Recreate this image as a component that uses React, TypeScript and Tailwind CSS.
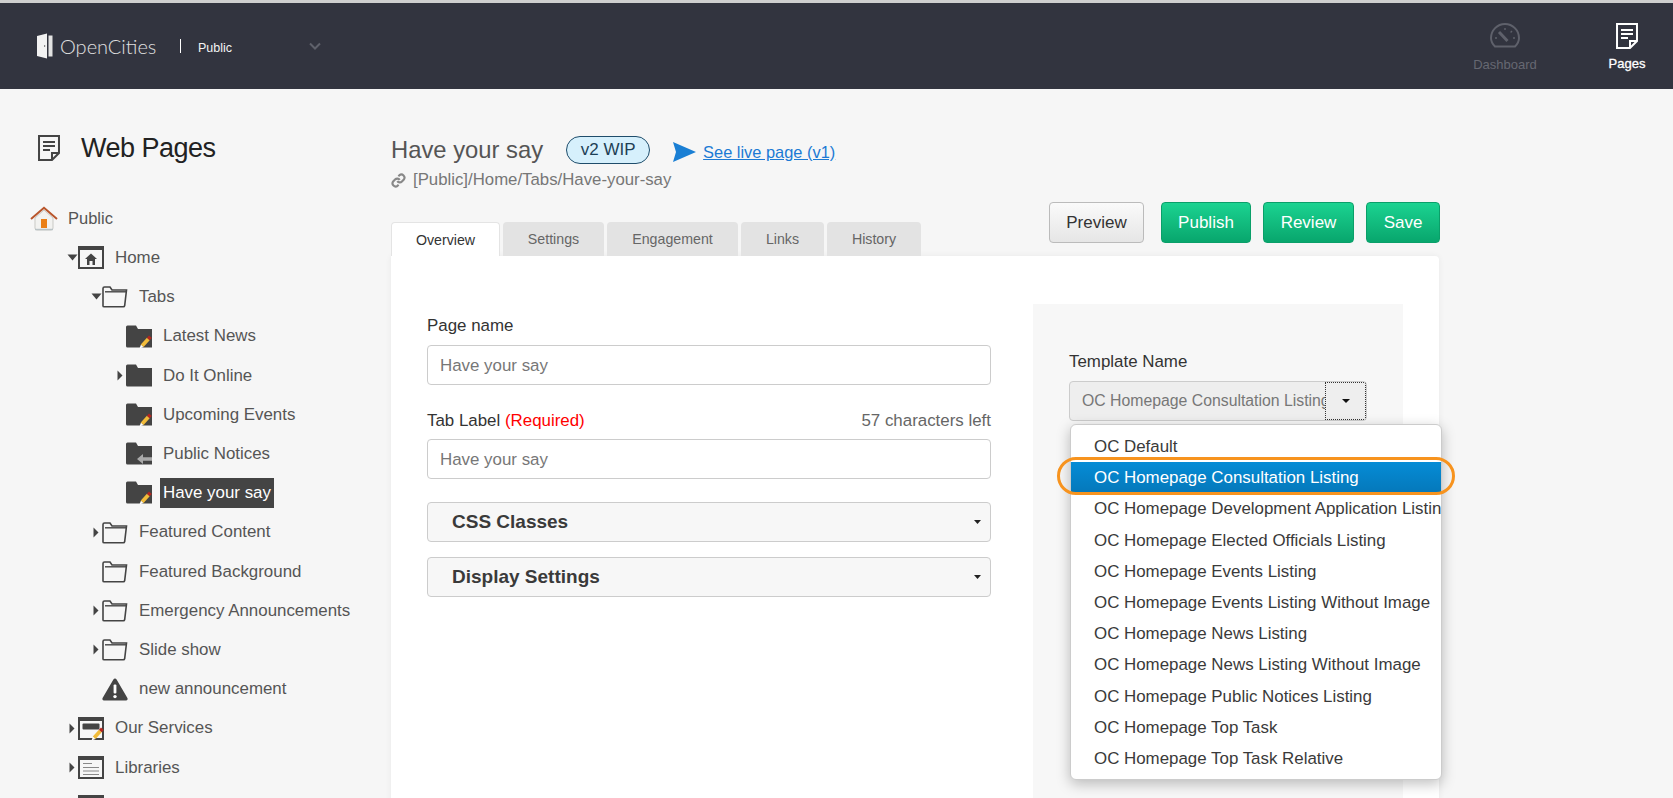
import React from "react";

const font = "font-['Liberation_Sans',Arial,sans-serif]";

const Caret = ({ dir }: { dir: "down" | "right" }) =>
  dir === "down" ? (
    <svg width="11" height="7" viewBox="0 0 11 7" className="shrink-0">
      <path d="M0.5 0.5h10L5.5 6.5z" fill="#444" />
    </svg>
  ) : (
    <svg width="6" height="11" viewBox="0 0 6 11" className="shrink-0">
      <path d="M0.5 0.5L5.5 5.5L0.5 10.5z" fill="#444" />
    </svg>
  );

const Pencil = () => (
  <g>
    <path d="M13.5 23.5L15 19.5L17.5 22z" fill="#fff" />
    <path d="M16.2 20.7L22.3 14" stroke="#f2bc3a" strokeWidth="3.8" />
    <path d="M22.3 14L24.4 11.8" stroke="#b5261e" strokeWidth="3.8" />
  </g>
);

const FolderOutline = () => (
  <svg width="26" height="23" viewBox="0 0 26 23" className="shrink-0">
    <path
      d="M1 21V3.5Q1 2 2.5 2H8l2 3h14.5l-1.8 15.5q-.2 1.2-1.4 1.2H2.2Q1 21.7 1 21z"
      fill="none"
      stroke="#444"
      strokeWidth="1.6"
    />
    <path d="M3 6.8H24" stroke="#444" strokeWidth="1.4" />
  </svg>
);

const FolderSolid = ({ mark }: { mark?: "pencil" | "arrow" }) => (
  <svg width="26" height="23" viewBox="0 0 26 23" className="shrink-0">
    <path d="M0 2Q0 0.5 1.5 0.5H10L12 4H26V22.5H1.5Q0 22.5 0 21z" fill="#444" />
    {mark === "pencil" && <Pencil />}
    {mark === "arrow" && <path d="M11 17L17 12V15.2H26V18.8H17V22z" fill="#a9a9a9" />}
  </svg>
);

const BoxIcon = ({ children }: { children?: React.ReactNode }) => (
  <svg width="26" height="23" viewBox="0 0 26 23" className="shrink-0">
    <rect x="1" y="1" width="24" height="21" fill="none" stroke="#444" strokeWidth="2" />
    <rect x="1" y="1" width="24" height="3" fill="#444" />
    {children}
  </svg>
);

const WarnIcon = () => (
  <svg width="26" height="24" viewBox="0 0 26 24" className="shrink-0">
    <path d="M13 1.5Q14 1.5 14.6 2.6L25.4 21q.8 2-1.2 2.4H1.8Q-.2 23 .6 21L11.4 2.6Q12 1.5 13 1.5z" fill="#444" />
    <rect x="11.6" y="7.5" width="2.8" height="9" rx="1" fill="#fff" />
    <circle cx="13" cy="19.6" r="1.7" fill="#fff" />
  </svg>
);

const HouseIcon = () => (
  <svg width="28" height="25" viewBox="0 0 28 25" className="shrink-0">
    <path d="M5 12V22Q5 24 7 24H21Q23 24 23 22V12L14 4z" fill="#f2f2f0" stroke="#c9c9c5" strokeWidth="1" />
    <path d="M1 13L14 1.8L27 13" fill="none" stroke="#b8552b" strokeWidth="2" />
    <rect x="11" y="13" width="6" height="9" fill="#ea7f16" />
    <path d="M5 23.5H23" stroke="#b9c3c6" strokeWidth="1.4" />
  </svg>
);

const PageIcon = ({ color, size }: { color: string; size: number }) => (
  <svg width={size} height={size * 1.18} viewBox="0 0 22 26" className="shrink-0">
    <path d="M1 1H21V18L14 25H1z" fill="none" stroke={color} strokeWidth="2" />
    <path d="M14 25V18H21" fill="none" stroke={color} strokeWidth="2" />
    <path d="M5 7H17M5 11H17M5 15H12" stroke={color} strokeWidth="2" />
  </svg>
);

const GaugeIcon = () => (
  <svg width="30" height="25" viewBox="0 0 30 25">
    <path
      d="M5 23.5Q1 19.5 1 15A14 14 0 0 1 29 15Q29 19.5 25 23.5z"
      fill="none"
      stroke="#5f616b"
      strokeWidth="2"
    />
    <path d="M9 9L17.5 18" stroke="#5f616b" strokeWidth="3" />
    <path d="M15 5v2M22 8l-1.4 1.4M25 15h-2M5 15h2" stroke="#5f616b" strokeWidth="1.4" />
  </svg>
);

const LinkIcon = () => (
  <svg width="15" height="15" viewBox="0 0 24 24" fill="none" stroke="#888" strokeWidth="3.4" className="shrink-0">
    <path d="M10 13a5 5 0 0 0 7.5.5l3-3a5 5 0 0 0-7-7l-1.7 1.7" />
    <path d="M14 11a5 5 0 0 0-7.5-.5l-3 3a5 5 0 0 0 7 7l1.7-1.7" />
  </svg>
);

type Row = {
  label: string;
  pl: number;
  caret?: "down" | "right";
  icon: React.ReactNode;
  selected?: boolean;
};

const rows: Row[] = [
  { label: "Home", pl: 66, caret: "down", icon: <BoxIcon><path d="M7 13L13 7.5L19 13H17V19H14.5V15H11.5V19H9V13z" fill="#444" /></BoxIcon> },
  { label: "Tabs", pl: 90, caret: "down", icon: <FolderOutline /> },
  { label: "Latest News", pl: 114, icon: <FolderSolid mark="pencil" /> },
  { label: "Do It Online", pl: 114, caret: "right", icon: <FolderSolid /> },
  { label: "Upcoming Events", pl: 114, icon: <FolderSolid mark="pencil" /> },
  { label: "Public Notices", pl: 114, icon: <FolderSolid mark="arrow" /> },
  { label: "Have your say", pl: 114, icon: <FolderSolid mark="pencil" />, selected: true },
  { label: "Featured Content", pl: 90, caret: "right", icon: <FolderOutline /> },
  { label: "Featured Background", pl: 90, icon: <FolderOutline /> },
  { label: "Emergency Announcements", pl: 90, caret: "right", icon: <FolderOutline /> },
  { label: "Slide show", pl: 90, caret: "right", icon: <FolderOutline /> },
  { label: "new announcement", pl: 90, icon: <WarnIcon /> },
  { label: "Our Services", pl: 66, caret: "right", icon: <BoxIcon><rect x="4.5" y="6.5" width="17" height="6" rx="1" fill="#444" /><Pencil /></BoxIcon> },
  { label: "Libraries", pl: 66, caret: "right", icon: <BoxIcon><path d="M5 7.5H14M5 11.5H21M5 15H21M5 18.5H21" stroke="#888" strokeWidth="1.1" /></BoxIcon> },
  { label: "", pl: 66, icon: <BoxIcon /> },
];

const tabs = [
  { label: "Overview", w: "w-[109px]", active: true },
  { label: "Settings", w: "w-[101px]" },
  { label: "Engagement", w: "w-[131px]" },
  { label: "Links", w: "w-[83px]" },
  { label: "History", w: "w-[94px]" },
];

const options = [
  "OC Default",
  "OC Homepage Consultation Listing",
  "OC Homepage Development Application Listing",
  "OC Homepage Elected Officials Listing",
  "OC Homepage Events Listing",
  "OC Homepage Events Listing Without Image",
  "OC Homepage News Listing",
  "OC Homepage News Listing Without Image",
  "OC Homepage Public Notices Listing",
  "OC Homepage Top Task",
  "OC Homepage Top Task Relative",
];

const GreenButton = ({ label, w }: { label: string; w: string }) => (
  <button className={`${w} h-[41px] rounded-[4px] border border-[#0a9f69] bg-gradient-to-b from-[#1bd391] to-[#08a66d] text-[17px] text-white`}>
    {label}
  </button>
);

const Accordion = ({ label }: { label: string }) => (
  <div className="h-[40px] rounded-[4px] border border-[#ccc] bg-[#f7f7f7] pl-[24px] pr-[9px] flex items-center justify-between">
    <span className="text-[19px] font-bold text-[#3a3a3a]">{label}</span>
    <svg width="7" height="4" viewBox="0 0 7 4">
      <path d="M0 0h7L3.5 4z" fill="#222" />
    </svg>
  </div>
);

export default function App() {
  return (
    <div className={`${font} h-[798px] w-[1673px] overflow-hidden bg-[#f6f6f6] text-[16.9px] text-[#555]`}>
      {/* ===== HEADER ===== */}
      <div className="h-[3px] bg-[#cfcfcf]" />
      <header className="h-[86px] bg-[#32343f] flex items-center pl-[37px]">
        <svg width="16" height="26" viewBox="0 0 16 26" className="shrink-0">
          <path d="M0 3L10 0.5V25.5L0 23z" fill="#f2f2f2" />
          <path d="M11.5 2.5H15.5V23.5H11.5z" fill="#e2e2e2" />
          <rect x="7" y="12" width="1.2" height="2" fill="#888" />
        </svg>
        <span className="ml-[7px] w-[120px] font-['Lato',sans-serif] font-light text-[20px] text-[#e0e0e0]">OpenCities</span>
        <span className="h-[14px] w-px bg-white" />
        <span className="ml-[17px] mt-[4px] text-[12.5px] text-[#f4f4f4] w-[111px]">Public</span>
        <svg width="12" height="8" viewBox="0 0 12 8">
          <path d="M1 1.5L6 6.5L11 1.5" fill="none" stroke="#5f616b" strokeWidth="2" />
        </svg>
        <div className="ml-auto mt-[6px] flex gap-[15px]">
          <div className="w-[122px] flex flex-col items-center gap-[7px] text-[13px] text-[#666872]">
            <GaugeIcon />
            <span>Dashboard</span>
          </div>
          <div className="w-[92px] flex flex-col items-center gap-[5px] text-[13px] text-white [-webkit-text-stroke:0.3px_white]">
            <PageIcon color="#ffffff" size={22} />
            <span>Pages</span>
          </div>
        </div>
      </header>
      {/* ===== HEADER END ===== */}

      <div className="flex">
        {/* ===== TREE ===== */}
        <aside className="w-[391px] shrink-0">
          <div className="mt-[44px] pl-[38px] flex items-center h-[30px]">
            <PageIcon color="#444" size={22} />
            <h1 className="ml-[21px] text-[27px] tracking-[-0.5px] text-[#222]">Web Pages</h1>
          </div>
          <div className="mt-[36px] pl-[30px] h-[39.2px] flex items-center">
            <HouseIcon />
            <span className="ml-[10px] text-[16.5px]">Public</span>
          </div>
          {rows.map((r, i) => (
            <div key={i} className="relative h-[39.2px] flex items-center" style={{ paddingLeft: r.pl + 12 }}>
              {r.caret && (
                <span className="absolute flex w-[12px] justify-center" style={{ left: r.pl }}>
                  <Caret dir={r.caret} />
                </span>
              )}
              {r.icon}
              {r.selected ? (
                <span className="ml-[8px] px-[3px] h-[30px] flex items-center bg-[#444] text-white">{r.label}</span>
              ) : (
                <span className="ml-[11px]">{r.label}</span>
              )}
            </div>
          ))}
        </aside>
        {/* ===== TREE END ===== */}

        <main className="w-[1049px]">
          {/* ===== TITLE ===== */}
          <div className="mt-[46px] h-[30px] flex items-center">
            <h2 className="text-[23.8px] text-[#555]">Have your say</h2>
            <span className="ml-[23px] h-[28px] w-[84px] rounded-full border border-[#1f4d6b] bg-[#d6f0fc] flex items-center justify-center text-[17px] text-[#1d3f55]">
              v2 WIP
            </span>
            <svg width="23" height="20" viewBox="0 0 23 20" className="ml-[23px] mt-[4px]">
              <path d="M0 0L23 10L0 20L3 10z" fill="#1a7fd4" />
            </svg>
            <a className="ml-[7px] mt-[4px] text-[16.4px] text-[#1b7ad4] underline">See live page (v1)</a>
          </div>
          <div className="mt-[5px] h-[20px] flex items-center gap-[7px] text-[16.8px] text-[#777]">
            <LinkIcon />
            <span>[Public]/Home/Tabs/Have-your-say</span>
          </div>
          {/* ===== TITLE END ===== */}

          {/* ===== TABS + ACTIONS ===== */}
          <div className="mt-[22px] flex justify-between h-[44px]">
            <div className="mt-[10px] flex gap-[3px]">
              {tabs.map((t) => (
                <div
                  key={t.label}
                  className={`${t.w} h-[34px] pt-[2px] rounded-t-[4px] flex items-center justify-center text-[14.2px] ${
                    t.active ? "bg-white text-[#333] border border-b-0 border-[#e4e4e4]" : "bg-[#e3e3e3] text-[#666]"
                  }`}
                >
                  {t.label}
                </div>
              ))}
            </div>
            <div className="-mt-[10px] flex">
              <button className="w-[95px] h-[41px] mr-[17px] rounded-[4px] border border-[#bbb] bg-gradient-to-b from-[#fafafa] to-[#e6e6e6] text-[17px] text-[#333]">
                Preview
              </button>
              <GreenButton label="Publish" w="w-[90px]" />
              <span className="w-[12px]" />
              <GreenButton label="Review" w="w-[91px]" />
              <span className="w-[12px]" />
              <GreenButton label="Save" w="w-[74px]" />
            </div>
          </div>
          {/* ===== TABS + ACTIONS END ===== */}

          {/* ===== CARD ===== */}
          <div className="h-[600px] w-[1048px] rounded-tr-[4px] bg-white flex shadow-[0_0_6px_rgba(0,0,0,0.06)]">
            <div className="ml-[36px] mt-[58px] w-[564px] text-[#333]">
              <label className="block h-[22px] leading-[24px]">Page name</label>
              <div className="mt-[9px] h-[40px] rounded-[4px] border border-[#ccc] pl-[12px] pt-[2px] flex items-center text-[#777]">Have your say</div>
              <div className="mt-[24px] h-[22px] leading-[24px] flex justify-between">
                <span>
                  Tab Label <span className="text-[#f00]">(Required)</span>
                </span>
                <span className="text-[#666]">57 characters left</span>
              </div>
              <div className="mt-[8px] h-[40px] rounded-[4px] border border-[#ccc] pl-[12px] pt-[2px] flex items-center text-[#777]">Have your say</div>
              <div className="mt-[23px]">
                <Accordion label="CSS Classes" />
              </div>
              <div className="mt-[15px]">
                <Accordion label="Display Settings" />
              </div>
            </div>

            {/* ===== TEMPLATE PANEL ===== */}
            <div className="relative ml-[42px] mt-[48px] w-[370px] bg-[#f7f7f7] pl-[36px] pt-[46px] text-[#333]">
              <label className="block h-[22px] leading-[24px]">Template Name</label>
              <div className="mt-[9px] h-[40px] w-[298px] rounded-[4px] border border-[#ccc] bg-[#eee] flex overflow-hidden">
                <span className="w-[255px] pl-[12px] overflow-hidden whitespace-nowrap text-[15.8px] leading-[38px] text-[#777]">
                  OC Homepage Consultation Listing
                </span>
                <span className="flex-1 border border-dotted border-[#333] flex items-center justify-center">
                  <svg width="8" height="4" viewBox="0 0 8 4">
                    <path d="M0 0h8L4 4z" fill="#111" />
                  </svg>
                </span>
              </div>

              {/* ===== DROPDOWN ===== */}
              <div className="absolute left-[37px] top-[120px] w-[372px] h-[356px] overflow-hidden rounded-[6px] border border-[#ccc] bg-white pt-[6px] shadow-[0_4px_14px_rgba(0,0,0,0.25)]">
                {options.map((o, i) => (
                  <div
                    key={o}
                    className={`h-[31.2px] pl-[23px] whitespace-nowrap leading-[32px] ${
                      i === 1 ? "bg-gradient-to-b from-[#058cd6] to-[#0578ba] text-white" : "text-[#3a3a3a]"
                    }`}
                  >
                    {o}
                  </div>
                ))}
              </div>
              <div className="absolute left-[24px] top-[153px] h-[38px] w-[398px] rounded-full border-[3px] border-[#f7931e]" />
              {/* ===== DROPDOWN END ===== */}
            </div>
            {/* ===== TEMPLATE PANEL END ===== */}
          </div>
          {/* ===== CARD END ===== */}
        </main>
      </div>
    </div>
  );
}
